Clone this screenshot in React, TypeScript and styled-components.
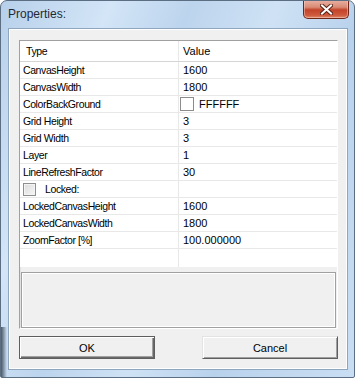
import React, { FC } from 'react';
import styled, { createGlobalStyle } from 'styled-components';

const GlobalStyle = createGlobalStyle`
	html, body {
		margin: 0;
		padding: 0;
		background: #ffffff;
	}
	* {
		box-sizing: border-box;
	}
`;

const Frame = styled.div`
	width: 355px;
	height: 378px;
	display: flex;
	flex-direction: column;
	border: 1px solid #5b6e82;
	border-radius: 7px 7px 2px 2px;
	overflow: hidden;
	background:
		linear-gradient(90deg, rgba(20, 30, 45, 0.7) 0px, rgba(20, 30, 45, 0) 6px) bottom left / 8px 50px no-repeat,
		linear-gradient(112deg, #b7d0ea 0%, #d3e5f7 22%, #bcd4ed 38%, #cfe2f5 55%, #b9d2ec 72%, #c9def3 100%);
	font-family: 'Liberation Sans', Arial, sans-serif;
`;

const TitleBar = styled.div`
	height: 28px;
	display: flex;
	align-items: flex-start;
	justify-content: space-between;
	padding-left: 7px;
`;

const Caption = styled.div`
	font-size: 12px;
	color: #1e2a38;
	margin-top: 6px;
`;

const CloseButton = styled.div`
	width: 46px;
	height: 19px;
	margin-right: 5px;
	margin-top: -1px;
	display: flex;
	align-items: center;
	justify-content: center;
	border: 1px solid #6e2619;
	border-top: none;
	border-radius: 0 0 5px 5px;
	background: linear-gradient(180deg, #e9b3a6 0%, #d98a74 40%, #c2432a 55%, #cf5a3d 85%, #e08a6c 100%);
	box-shadow: inset 0 0 0 1px rgba(255, 220, 210, 0.45);
`;

const Client = styled.div`
	flex: 1;
	margin: 0 6px 7px 7px;
	display: flex;
	flex-direction: column;
	padding: 11px 9px 10px 10px;
	background: #f0f0f0;
	border: 1px solid #8fa6bf;
	box-shadow: inset 0 0 0 1px #ffffff;
`;

const Panel = styled.div`
	height: 289px;
	display: flex;
	flex-direction: column;
	border: 1px solid;
	border-color: #a0a0a0 #ffffff #ffffff #a0a0a0;
	box-shadow: inset 1px 1px 0 #e3e3e3;
`;

const Grid = styled.div`
	height: 226px;
	display: flex;
	flex-direction: column;
	background: #ffffff;
	font-size: 11px;
	color: #000000;
`;

const Row = styled.div<{ $header?: boolean }>`
	height: ${(p) => (p.$header ? 21 : 17)}px;
	display: grid;
	grid-template-columns: 159px 1fr;
	border-bottom: 1px solid ${(p) => (p.$header ? '#d5d5d5' : '#e8e8e8')};
`;

const Cell = styled.div<{ $value?: boolean }>`
	display: flex;
	align-items: center;
	gap: 5px;
	padding-left: ${(p) => (p.$value ? 4 : 3)}px;
	border-right: ${(p) => (p.$value ? 'none' : '1px solid #e8e8e8')};
	white-space: nowrap;
	font-size: ${(p) => (p.$value ? 11 : 10.5)}px;
	letter-spacing: ${(p) => (p.$value ? 0 : -0.4)}px;
`;

const Filler = styled.div`
	flex: 1;
	display: grid;
	grid-template-columns: 159px 1fr;
`;

const FillerColumn = styled.div`
	border-right: 1px solid #e8e8e8;
`;

const Swatch = styled.span`
	width: 14px;
	height: 14px;
	margin-left: -3px;
	background: #ffffff;
	border: 1px solid #8c8c8c;
`;

const CheckBox = styled.span`
	width: 13px;
	height: 13px;
	margin-right: 4px;
	border: 1px solid #8f8f8f;
	background: linear-gradient(135deg, #dcdcdc 0%, #f6f6f6 100%);
	box-shadow: inset 0 0 0 1px #f4f4f4;
`;

const Description = styled.div`
	height: 56px;
	margin: 5px 1px 0 1px;
	background: #f0f0f0;
	border: 1px solid #a0a0a0;
	box-shadow: inset 0 0 0 1px #ffffff;
`;

const Footer = styled.div`
	display: flex;
	justify-content: space-between;
	margin-top: 7px;
`;

const Button = styled.button<{ $default?: boolean }>`
	width: 136px;
	height: 23px;
	padding: 0;
	font-family: 'Liberation Sans', Arial, sans-serif;
	font-size: 11px;
	color: #000000;
	background: #f0f0f0;
	border: 1px solid;
	border-color: ${(p) => (p.$default ? '#5e5e5e' : '#e3e3e3 #5e5e5e #5e5e5e #e3e3e3')};
	box-shadow: ${(p) =>
		p.$default
			? 'inset 1px 1px 0 #ffffff, inset -1px -1px 0 #696969, inset -2px -2px 0 #a0a0a0'
			: 'inset 1px 1px 0 #ffffff, inset -1px -1px 0 #a0a0a0'};
`;

type Prop = { name: string; value?: string; kind?: 'color' | 'check' };

const props: Prop[] = [
	{ name: 'CanvasHeight', value: '1600' },
	{ name: 'CanvasWidth', value: '1800' },
	{ name: 'ColorBackGround', value: 'FFFFFF', kind: 'color' },
	{ name: 'Grid Height', value: '3' },
	{ name: 'Grid Width', value: '3' },
	{ name: 'Layer', value: '1' },
	{ name: 'LineRefreshFactor', value: '30' },
	{ name: 'Locked:', kind: 'check' },
	{ name: 'LockedCanvasHeight', value: '1600' },
	{ name: 'LockedCanvasWidth', value: '1800' },
	{ name: 'ZoomFactor [%]', value: '100.000000' },
];

const App: FC = () => {
	return (
		<>
			<GlobalStyle />
			<Frame>
				<TitleBar>
					<Caption>Properties:</Caption>
					<CloseButton>
						<svg width="13" height="11" viewBox="0 0 13 11">
							<path
								d="M2 1.5 L11 9.5 M11 1.5 L2 9.5"
								stroke="#5a2418"
								strokeWidth="4"
								strokeLinecap="square"
							/>
							<path
								d="M2 1.5 L11 9.5 M11 1.5 L2 9.5"
								stroke="#ffffff"
								strokeWidth="2"
								strokeLinecap="square"
							/>
						</svg>
					</CloseButton>
				</TitleBar>
				<Client>
					<Panel>
						<Grid>
							<Row $header>
								<Cell style={{ paddingLeft: 6 }}>Type</Cell>
								<Cell $value>Value</Cell>
							</Row>
							{props.map((p) => (
								<Row key={p.name}>
									<Cell>
										{p.kind === 'check' && <CheckBox />}
										{p.name}
									</Cell>
									<Cell $value>
										{p.kind === 'color' && <Swatch />}
										{p.value}
									</Cell>
								</Row>
							))}
							<Filler>
								<FillerColumn />
								<div />
							</Filler>
						</Grid>
						<Description />
					</Panel>
					<Footer>
						<Button $default>OK</Button>
						<Button>Cancel</Button>
					</Footer>
				</Client>
			</Frame>
		</>
	);
};

export default App;
